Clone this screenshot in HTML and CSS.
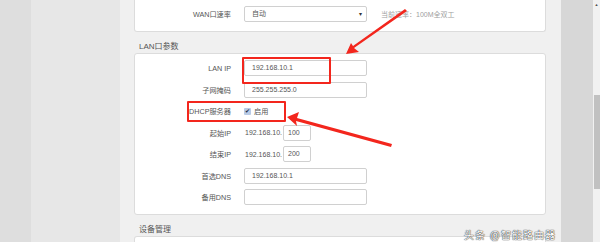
FILE: index.html
```html
<!DOCTYPE html>
<html lang="zh-CN">
<head>
    <meta charset="UTF-8">
    <title>LAN口参数</title>
    <link rel="stylesheet" href="styles.css">
</head>
<body>
    <div class="page">
        <div class="side-dark"></div>
        <div class="side-light"></div>
        <div class="main">
            <div class="card card-top">
                <div class="form-row">
                    <label>WAN口速率</label>
                    <div class="select">自动<span class="caret">▾</span></div>
                    <span class="hint">当前速率：100M全双工</span>
                </div>
            </div>

            <h4 class="section-title">LAN口参数</h4>
            <div class="card">
                <div class="form">
                    <div class="form-row">
                        <label>LAN IP</label>
                        <div class="input">192.168.10.1</div>
                    </div>
                    <div class="form-row">
                        <label>子网掩码</label>
                        <div class="input">255.255.255.0</div>
                    </div>
                    <div class="form-row">
                        <label>DHCP服务器</label>
                        <div class="check"><span class="box">✔</span>启用</div>
                    </div>
                    <div class="form-row">
                        <label>起始IP</label>
                        <span class="prefix">192.168.10.</span>
                        <div class="input short">100</div>
                    </div>
                    <div class="form-row">
                        <label>结束IP</label>
                        <span class="prefix">192.168.10.</span>
                        <div class="input short">200</div>
                    </div>
                    <div class="form-row">
                        <label>首选DNS</label>
                        <div class="input">192.168.10.1</div>
                    </div>
                    <div class="form-row">
                        <label>备用DNS</label>
                        <div class="input"></div>
                    </div>
                </div>
            </div>

            <h4 class="section-title">设备管理</h4>
            <div class="card card-bottom"></div>
        </div>
        <div class="side-right"></div>
        <div class="scrollbar">
            <span class="scroll-up">▲</span>
            <div class="thumb"></div>
        </div>
    </div>

    <!-- annotations drawn over the screenshot -->
    <div class="mark mark-lan"></div>
    <div class="mark mark-dhcp"></div>
    <svg class="arrows" width="600" height="242" viewBox="0 0 600 242">
        <polygon points="405,9 407,11 354,48 359,52 346,54 351,43 353,46" fill="#f3261d"/>
        <polygon points="392,144 391,147 296,121 297,126 287,117 299,112 297,118" fill="#f3261d"/>
    </svg>
    <div class="watermark">头条 @智能路由器</div>
</body>
</html>
```

FILE: styles.css
```css
body {
    margin: 0;
    width: 600px;
    height: 242px;
    overflow: hidden;
    position: relative;
    font-family: "Liberation Sans", "Noto Sans CJK SC", sans-serif;
    font-size: 7px;
    color: #555;
    background-color: #f0f0f0;
}
.page {
    display: flex;
    height: 242px;
}
.side-dark {
    width: 31px;
    background-color: #dedede;
}
.side-light {
    width: 89px;
    background-color: #e7e7e7;
}
.main {
    width: 412px;
    padding: 0 15px 0 14px;
    background-color: #f0f0f0;
}
.side-right {
    width: 32px;
    background-color: #d7d7d7;
}
.scrollbar {
    width: 7px;
    background-color: #f1f1f1;
    position: relative;
}
.scroll-up {
    display: block;
    font-size: 4px;
    color: #505050;
    text-align: center;
    margin-top: 2px;
}
.thumb {
    width: 6px;
    height: 94px;
    margin: 88px 0 0 1px;
    background-color: #c1c1c1;
}
.card {
    background: white;
    border: 1px solid #dcdcdc;
    border-radius: 3px;
}
.card-top {
    border-top: none;
    border-radius: 0 0 3px 3px;
    height: 31px;
}
.card-top .form-row {
    padding-top: 6px;
}
.card-bottom {
    height: 20px;
    border-bottom: none;
    border-radius: 3px 3px 0 0;
}
.section-title {
    margin: 0;
    padding-left: 5px;
    height: 21px;
    line-height: 30px;
    font-size: 8px;
    font-weight: normal;
    color: #555;
}
.form {
    display: flex;
    flex-direction: column;
    gap: 5.5px;
    padding: 6px 0 9px;
}
.form-row {
    display: flex;
    align-items: center;
    height: 16px;
}
.form-row label {
    width: 96px;
    margin-right: 13px;
    text-align: right;
    font-size: 7.2px;
    color: #555;
}
.input, .select {
    box-sizing: border-box;
    width: 123px;
    height: 16px;
    line-height: 14px;
    border: 1px solid #d0d0d0;
    border-radius: 2px;
    padding-left: 7px;
    font-size: 7px;
    color: #555;
    background: white;
}
.select {
    position: relative;
}
.caret {
    position: absolute;
    right: 4px;
    top: 0;
    font-size: 6px;
    color: #333;
}
.hint {
    margin-left: 14px;
    color: #a0a0a0;
    font-size: 7px;
}
.prefix {
    margin-left: 1px;
    margin-right: 1px;
    font-size: 7px;
    color: #555;
}
.input.short {
    width: 28px;
    padding-left: 4px;
}
.check {
    display: flex;
    align-items: center;
    font-size: 7.2px;
}
.box {
    width: 7px;
    height: 7px;
    margin-right: 3px;
    border-radius: 1px;
    background: #b9cbe6;
    color: #1a2a44;
    font-size: 6px;
    line-height: 7px;
    text-align: center;
}
.mark {
    position: absolute;
    border: 2px solid #f3261d;
    border-radius: 1px;
}
.mark-lan {
    left: 242px;
    top: 57px;
    width: 85px;
    height: 23px;
}
.mark-dhcp {
    left: 187px;
    top: 101px;
    width: 95px;
    height: 17px;
}
.arrows {
    position: absolute;
    left: 0;
    top: 0;
}
.watermark {
    position: absolute;
    left: 464px;
    top: 230px;
    font-size: 10px;
    line-height: 12px;
    color: white;
    letter-spacing: 1px;
    text-shadow: 0 0 1px #222, 0 0 1px #222;
}
```
